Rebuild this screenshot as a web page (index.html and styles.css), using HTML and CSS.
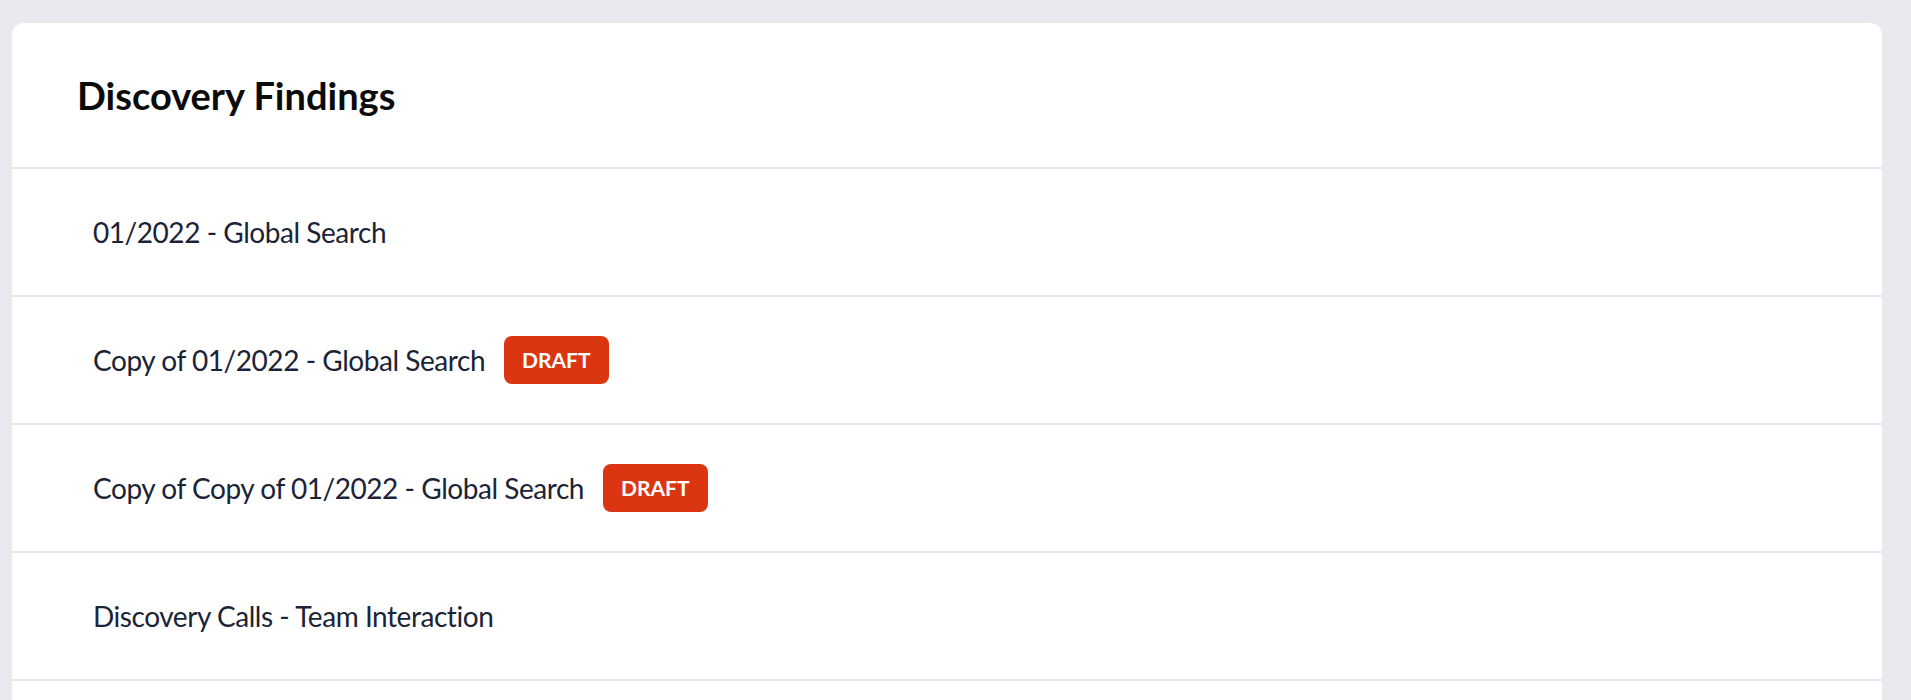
FILE: index.html
```html
<!DOCTYPE html>
<html lang="en">
<head>
  <meta charset="UTF-8" />
  <meta name="viewport" content="width=device-width, initial-scale=1" />
  <title>Discovery Findings</title>
  <link rel="stylesheet" href="styles.css">
</head>
<body>

  <div class="card">
    <div class="card-header">
      <h1>Discovery Findings</h1>
    </div>

    <ul class="findings">
      <li class="finding">
        <span class="finding-name">01/2022 - Global Search</span>
      </li>
      <li class="finding">
        <span class="finding-name">Copy of 01/2022 - Global Search</span>
        <span class="badge">DRAFT</span>
      </li>
      <li class="finding">
        <span class="finding-name">Copy of Copy of 01/2022 - Global Search</span>
        <span class="badge">DRAFT</span>
      </li>
      <li class="finding">
        <span class="finding-name">Discovery Calls - Team Interaction</span>
      </li>
    </ul>
  </div>

</body>
</html>
```

FILE: styles.css
```css
body {
  margin: 0;
  padding: 23px 29px 0 12px;
  background: #e9eaef;
  font-family: Lato, "Noto Sans", sans-serif;
  overflow: hidden;
}

.card {
  background: #fff;
  border-radius: 12px 12px 0 0;
  min-height: 720px;
}

.card-header {
  height: 144px;
  display: flex;
  align-items: center;
  padding: 0 65px;
  border-bottom: 2px solid #e6e7ec;
}

.card-header h1 {
  margin: 0;
  font-size: 38px;
  font-weight: 700;
  color: #0b0b0b;
}

.findings {
  list-style: none;
  margin: 0;
  padding: 0;
}

.finding {
  height: 126px;
  display: flex;
  align-items: center;
  padding: 0 81px;
  border-bottom: 2px solid #e6e7ec;
}

.finding-name {
  font-size: 28px;
  letter-spacing: -0.45px;
  color: #1b2437;
}

.badge {
  margin-left: 19px;
  height: 48px;
  line-height: 48px;
  padding: 0 18px;
  border-radius: 8px;
  background: #dc3511;
  color: #fff;
  font-size: 21px;
  font-weight: 700;
}
```
